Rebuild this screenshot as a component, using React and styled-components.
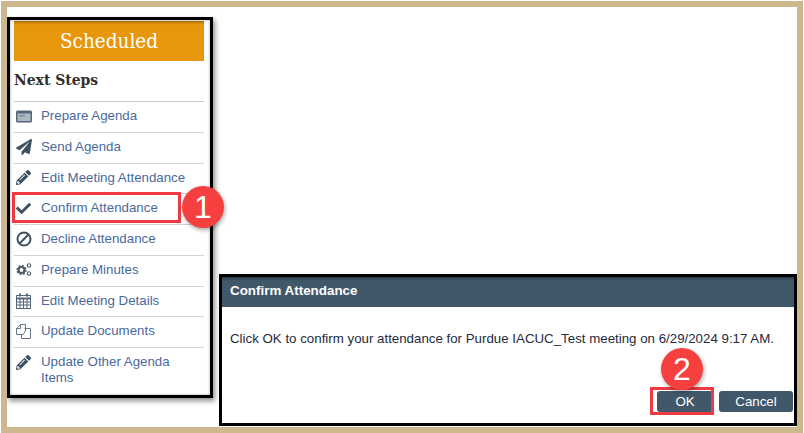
import React from "react";
import styled, { createGlobalStyle } from "styled-components";
import { FaPencilAlt, FaPaperPlane, FaCheck } from "react-icons/fa";

const Global = createGlobalStyle`
  html, body { margin: 0; padding: 0; background: #fff; }
  body { font-family: "Liberation Sans", Arial, sans-serif; }
`;

const Frame = styled.div`
  position: relative;
  box-sizing: border-box;
  width: 802px;
  height: 432px;
  margin: 1px 0 0 1px;
  border: 6px solid #cdb88e;
  display: flex;
  gap: 6px;
  background: #fff;
  overflow: hidden;
`;

const Sidebar = styled.aside`
  box-sizing: border-box;
  flex: none;
  width: 206px;
  height: 381px;
  margin-top: 10px;
  border: 3px solid #000;
  padding: 1px 6px 0 4px;
  box-shadow: 2px 3px 5px rgba(0, 0, 0, 0.45), inset 0 0 3px rgba(0, 0, 0, 0.35);
  background: #fff;
`;

const Status = styled.div`
  height: 40px;
  background: #e8960c;
  color: #fff;
  font-family: "DejaVu Serif", serif;
  font-stretch: condensed;
  font-size: 20.5px;
  line-height: 40px;
  text-align: center;
  box-shadow: inset 0 3px 3px -2px rgba(70, 50, 0, 0.6);
`;

const Heading = styled.h2`
  margin: 0;
  height: 41px;
  box-sizing: border-box;
  padding: 10px 0 0 0;
  font-family: "DejaVu Serif", serif;
  font-stretch: condensed;
  font-weight: 700;
  font-size: 15.5px;
  line-height: 18px;
  color: #2f2f2f;
  border-bottom: 1px solid #c9c9c9;
`;

const Steps = styled.ul`
  list-style: none;
  margin: 0;
  padding: 0;
`;

const Step = styled.li`
  display: flex;
  align-items: flex-start;
  box-sizing: border-box;
  min-height: 30.75px;
  padding: 6px 0 7px 2px;
  border-bottom: ${(p) => (p.$last ? "none" : "1px solid #d2d2d2")};
  color: #4a6a9b;
  font-size: 13.3px;
  line-height: 16px;
`;

const IconSlot = styled.span`
  flex: none;
  width: 25px;
  height: 16px;
  display: flex;
  align-items: center;
  color: #3f5160;
  font-size: 15px;
`;

const Label = styled.span`
  flex: 1;
`;

const Dialog = styled.section`
  box-sizing: border-box;
  flex: none;
  align-self: flex-end;
  width: 578px;
  height: 152px;
  margin-bottom: 1px;
  border: 3px solid #000;
  display: flex;
  flex-direction: column;
  background: #fff;
`;

const DialogTitle = styled.header`
  height: 30px;
  box-sizing: border-box;
  padding: 0 8px;
  background: #41586a;
  box-shadow: inset 0 3px 3px -2px rgba(0, 0, 0, 0.5);
  color: #fff;
  font-size: 13.4px;
  font-weight: 700;
  line-height: 28px;
`;

const DialogBody = styled.p`
  margin: 0;
  padding: 23px 8px 0;
  flex: 1;
  font-size: 13.3px;
  line-height: 18px;
  color: #1f2a3a;
`;

const DialogActions = styled.div`
  display: flex;
  justify-content: flex-end;
  gap: 6px;
  padding: 0 1px 11px 0;
`;

const Button = styled.button`
  box-sizing: border-box;
  width: ${(p) => p.$w}px;
  height: 21px;
  border: none;
  border-radius: 3px;
  background: #41586a;
  color: #fff;
  font-family: inherit;
  font-size: 13.3px;
  padding: 0;
`;

const Highlight = styled.div`
  position: absolute;
  border: 3px solid #ee3a43;
  box-sizing: border-box;
`;

const ConfirmBox = styled(Highlight)`
  left: 5px;
  top: 185px;
  width: 169px;
  height: 31px;
`;

const OkBox = styled(Highlight)`
  left: 643px;
  top: 380px;
  width: 64px;
  height: 28px;
`;

const Badge = styled.div`
  position: absolute;
  left: ${(p) => p.$x}px;
  top: ${(p) => p.$y}px;
  width: 42px;
  height: 42px;
  border-radius: 50%;
  background: #f5403f;
  color: #fff;
  font-size: 32px;
  line-height: 42px;
  text-align: center;
  box-shadow: 1px 2px 4px rgba(0, 0, 0, 0.35);
`;

const CardIcon = () => (
  <svg width="16" height="13" viewBox="0 0 16 13">
    <rect x="0" y="0.5" width="16" height="12" rx="1.5" fill="#55677a" />
    <rect x="1.5" y="3.5" width="13" height="7.5" fill="#aeb8c2" />
    <rect x="3" y="5" width="6" height="1.5" fill="#7f8d9a" />
  </svg>
);

const BanIcon = () => (
  <svg width="16" height="16" viewBox="0 0 16 16" fill="none" stroke="#3f5160" strokeWidth="2">
    <circle cx="8" cy="8" r="6.5" />
    <path d="M3.5 12.5L12.5 3.5" />
  </svg>
);

const GearsIcon = () => (
  <svg width="16" height="15" viewBox="0 0 16 15" fill="none" stroke="#4a5c6c">
    <circle cx="5.5" cy="8" r="3" strokeWidth="2.2" />
    <circle cx="5.5" cy="8" r="4.4" strokeWidth="1.6" strokeDasharray="1.7 1.75" />
    <circle cx="13" cy="3.5" r="1.7" strokeWidth="1.1" />
    <circle cx="13" cy="11.5" r="1.7" strokeWidth="1.1" />
  </svg>
);

const CalendarIcon = () => (
  <svg width="15" height="16" viewBox="0 0 15 16" fill="none" stroke="#55677a" strokeWidth="1">
    <rect x="0.5" y="2.5" width="14" height="13" />
    <path d="M0.5 5.5H14.5" strokeWidth="2" />
    <path d="M0.5 9H14.5M0.5 12H14.5M4 5.5V15.5M7.5 5.5V15.5M11 5.5V15.5" />
    <path d="M4 0.5V3.5M11 0.5V3.5" strokeWidth="2" />
  </svg>
);

const DocsIcon = () => (
  <svg width="15" height="15" viewBox="0 0 15 15" fill="none" stroke="#66778a" strokeWidth="1">
    <path d="M8.5 4.5H14.5V14.5H5.5V11" />
    <path d="M4.5 0.5H9.5V7L7 10.5H0.5V4.5Z" />
    <path d="M0.5 4.5H4.5V0.5" />
  </svg>
);

const steps = [
  { label: "Prepare Agenda", icon: <CardIcon /> },
  { label: "Send Agenda", icon: <FaPaperPlane size={16} /> },
  { label: "Edit Meeting Attendance", icon: <FaPencilAlt /> },
  { label: "Confirm Attendance", icon: <FaCheck /> },
  { label: "Decline Attendance", icon: <BanIcon /> },
  { label: "Prepare Minutes", icon: <GearsIcon /> },
  { label: "Edit Meeting Details", icon: <CalendarIcon /> },
  { label: "Update Documents", icon: <DocsIcon /> },
  { label: "Update Other Agenda Items", icon: <FaPencilAlt /> },
];

export default function App() {
  return (
    <>
      <Global />
      <Frame>
        <Sidebar>
          <Status>Scheduled</Status>
          <Heading>Next Steps</Heading>
          <Steps>
            {steps.map((s, i) => (
              <Step key={s.label} $last={i === steps.length - 1}>
                <IconSlot>{s.icon}</IconSlot>
                <Label>{s.label}</Label>
              </Step>
            ))}
          </Steps>
        </Sidebar>
        <Dialog>
          <DialogTitle>Confirm Attendance</DialogTitle>
          <DialogBody>
            Click OK to confirm your attendance for Purdue IACUC_Test meeting on 6/29/2024 9:17 AM.
          </DialogBody>
          <DialogActions>
            <Button $w={56}>OK</Button>
            <Button $w={74}>Cancel</Button>
          </DialogActions>
        </Dialog>
        <ConfirmBox />
        <OkBox />
        <Badge $x={175} $y={179}>1</Badge>
        <Badge $x={654} $y={341}>2</Badge>
      </Frame>
    </>
  );
}
